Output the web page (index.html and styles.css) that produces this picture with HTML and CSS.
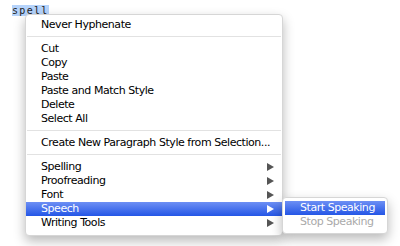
FILE: index.html
```html
<!DOCTYPE html>
<html lang="en">
<head>
  <meta charset="UTF-8">
  <title>Context Menu</title>
  <link rel="stylesheet" href="styles.css">
</head>
<body>
  <div class="doc">
    <span class="selected">spell</span>
  </div>

  <div class="menu">
    <div class="item">Never Hyphenate</div>
    <div class="sep"></div>
    <div class="item">Cut</div>
    <div class="item">Copy</div>
    <div class="item">Paste</div>
    <div class="item">Paste and Match Style</div>
    <div class="item">Delete</div>
    <div class="item">Select All</div>
    <div class="sep"></div>
    <div class="item">Create New Paragraph Style from Selection...</div>
    <div class="sep"></div>
    <div class="item sub">Spelling <span class="arrow"></span></div>
    <div class="item sub">Proofreading <span class="arrow"></span></div>
    <div class="item sub">Font <span class="arrow"></span></div>
    <div class="item sub active">Speech <span class="arrow"></span></div>
    <div class="item sub">Writing Tools <span class="arrow"></span></div>
  </div>

  <div class="menu submenu">
    <div class="item active">Start Speaking</div>
    <div class="item disabled">Stop Speaking</div>
  </div>
</body>
</html>
```

FILE: styles.css
```css
body {
  margin: 0;
  background: #ffffff;
  font-family: 'DejaVu Sans', Verdana, sans-serif;
  color: #000;
}
.doc {
  padding: 4px 0 0 12px;
  font-family: 'DejaVu Sans Mono', monospace;
  font-size: 10px;
  line-height: 13px;
  letter-spacing: 1.3px;
  color: #222;
}
.selected {
  background: #b5d3fb;
}
.menu {
  position: absolute;
  left: 25px;
  top: 14px;
  width: 256px;
  padding: 3px 0 5px;
  background: #ffffff;
  border: 1px solid #d6d6d6;
  border-radius: 4px;
  box-shadow: 0 5px 12px rgba(0,0,0,0.28);
  font-size: 11px;
  letter-spacing: -0.45px;
}
.item {
  height: 14px;
  line-height: 14px;
  padding-left: 15px;
  position: relative;
  white-space: nowrap;
}
.sep {
  height: 1px;
  background: #e2e2e2;
  margin: 4px 1px 5px;
}
.arrow {
  position: absolute;
  right: 8px;
  top: 3px;
  width: 0;
  height: 0;
  border-top: 4px solid transparent;
  border-bottom: 4px solid transparent;
  border-left: 7px solid #555;
}
.active {
  background: linear-gradient(#6d8ff4, #2456e6);
  color: #fff;
}
.active .arrow {
  border-left-color: #fff;
}
.submenu {
  left: 282px;
  top: 197px;
  width: 104px;
  padding: 3px 0 4px;
}
.submenu .item {
  padding-left: 15px;
  margin: 0 2px;
}
.disabled {
  color: #aaaaaa;
}
```
